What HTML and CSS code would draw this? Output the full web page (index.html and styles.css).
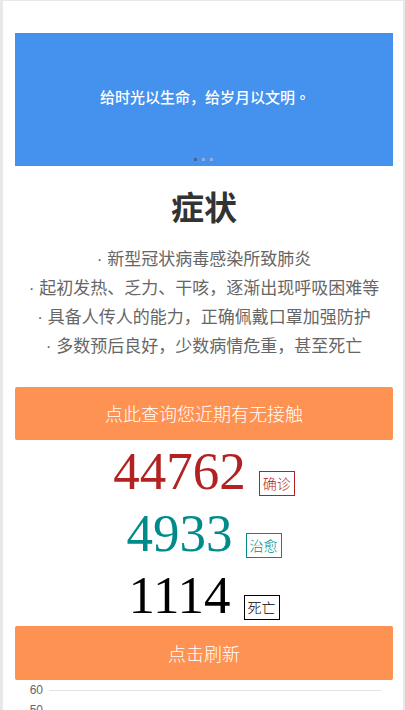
FILE: index.html
```html
<!DOCTYPE html>
<html lang="zh">
<head>
<meta charset="utf-8">
<title>症状</title>
<link rel="stylesheet" href="styles.css">
</head>
<body>
<div class="page">
  <div class="banner">
    <div class="banner-text">给时光以生命，给岁月以文明<span class="stop">。</span></div>
    <div class="dots"><span class="dot active"></span><span class="dot"></span><span class="dot"></span></div>
  </div>
  <h1 class="title">症状</h1>
  <ul class="symptoms">
    <li>· 新型冠状病毒感染所致肺炎</li>
    <li>· 起初发热、乏力、干咳，逐渐出现呼吸困难等</li>
    <li>· 具备人传人的能力，正确佩戴口罩加强防护</li>
    <li>· 多数预后良好，少数病情危重，甚至死亡</li>
  </ul>
  <div class="btn btn-query">点此查询您近期有无接触</div>
  <div class="stat stat-confirm"><span class="num">44762</span><span class="tag">确诊</span></div>
  <div class="stat stat-cure"><span class="num">4933</span><span class="tag">治愈</span></div>
  <div class="stat stat-dead"><span class="num">1114</span><span class="tag">死亡</span></div>
  <div class="btn btn-refresh">点击刷新</div>
  <div class="chart">
    <div class="chart-row"><span class="axis">60</span><span class="grid"></span></div>
    <div class="chart-row"><span class="axis">50</span><span class="grid"></span></div>
  </div>
</div>
</body>
</html>
```
FILE: styles.css
```css
html, body {
  margin: 0;
  padding: 0;
}
body {
  background: #e8e8e8;
  font-family: "Noto Sans CJK SC", "Noto Sans", sans-serif;
  height: 710px;
  overflow: hidden;
}
.page {
  background: #fff;
  margin: 1px 2px 0 3px;
  padding: 32px 10px 0 12px;
  height: 709px;
  box-sizing: border-box;
  overflow: hidden;
}
.banner {
  background: #4591ee;
  height: 133px;
  display: flex;
  flex-direction: column;
  align-items: center;
}
.banner-text {
  flex: 1;
  display: flex;
  align-items: center;
  padding-top: 2px;
  padding-left: 2px;
  color: #fff;
  font-size: 15px;
  font-weight: 500;
}
.stop {
  font-family: "Noto Sans CJK TC", sans-serif;
}
.dots {
  display: flex;
  gap: 5px;
  padding-bottom: 5px;
  padding-right: 2px;
}
.dot {
  width: 3px;
  height: 3px;
  background: #8fb0de;
}
.dot.active {
  background: #45658f;
}
.title {
  margin: 17px 0 0;
  text-align: center;
  font-size: 33px;
  line-height: 46px;
  font-weight: bold;
  color: #333;
}
.symptoms {
  list-style: none;
  margin: 16px 0 0;
  padding: 0;
  text-align: center;
  font-family: "Liberation Sans", "Noto Sans CJK SC", sans-serif;
  font-size: 17px;
  line-height: 29px;
  color: #666;
}
.btn {
  background: #fe9253;
  color: #fff;
  border-radius: 2px;
  text-align: center;
  font-size: 18px;
  font-weight: 300;
}
.btn-query {
  margin-top: 26px;
  height: 53px;
  line-height: 53px;
}
.btn-refresh {
  height: 54px;
  line-height: 54px;
}
.stat {
  display: flex;
  justify-content: center;
  align-items: baseline;
  gap: 13px;
  font-family: "Liberation Serif", serif;
  font-size: 53px;
  line-height: 62px;
  height: 62px;
  white-space: nowrap;
}
.tag {
  display: inline-block;
  font-family: "Noto Sans CJK SC", sans-serif;
  font-size: 14px;
  font-weight: 300;
  line-height: 19px;
  padding: 2px 3px;
  border: 1px solid currentColor;
}
.stat-confirm { color: #b22222; }
.stat-cure { color: #008b8b; }
.stat-dead { color: #000; }
.chart {
  padding-right: 12px;
}
.chart-row {
  display: flex;
  align-items: center;
  height: 20px;
}
.axis {
  width: 28px;
  text-align: right;
  font-family: "Liberation Sans", sans-serif;
  font-size: 12px;
  color: #666;
}
.grid {
  flex: 1;
  margin-left: 6px;
  height: 1px;
  background: #e3e3e3;
}
```
